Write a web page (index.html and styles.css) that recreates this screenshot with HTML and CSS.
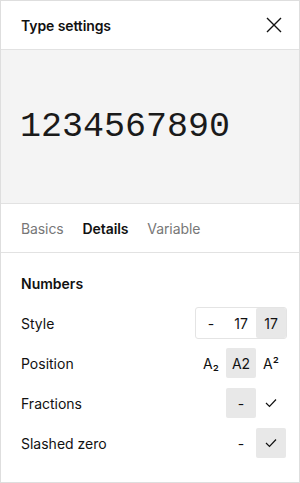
FILE: index.html
```html
<!DOCTYPE html>
<html lang="en">
<head>
    <meta charset="UTF-8">
    <title>Type settings</title>
    <link rel="stylesheet" href="styles.css">
</head>
<body>
    <div class="panel">
        <div class="header">
            <span class="title">Type settings</span>
            <svg class="close" width="16" height="16" viewBox="0 0 16 16">
                <path d="M1 1 L15 15 M15 1 L1 15" stroke="#111" stroke-width="1.4" fill="none"/>
            </svg>
        </div>

        <div class="preview">1234567890</div>

        <div class="tabs">
            <a class="tab">Basics</a>
            <a class="tab active">Details</a>
            <a class="tab">Variable</a>
        </div>

        <div class="section">
            <div class="section-title">Numbers</div>

            <div class="row">
                <span class="label">Style</span>
                <div class="seg boxed">
                    <span class="cell">-</span>
                    <span class="cell">17</span>
                    <span class="cell on">17</span>
                </div>
            </div>

            <div class="row">
                <span class="label">Position</span>
                <div class="seg">
                    <span class="cell">A₂</span>
                    <span class="cell on">A2</span>
                    <span class="cell">A²</span>
                </div>
            </div>

            <div class="row">
                <span class="label">Fractions</span>
                <div class="seg">
                    <span class="cell on">-</span>
                    <span class="cell">
                        <svg width="12" height="10" viewBox="0 0 12 10"><path d="M1 5 L4.5 8.5 L11 1.5" stroke="#111" stroke-width="1.2" fill="none"/></svg>
                    </span>
                </div>
            </div>

            <div class="row">
                <span class="label">Slashed zero</span>
                <div class="seg">
                    <span class="cell">-</span>
                    <span class="cell on">
                        <svg width="12" height="10" viewBox="0 0 12 10"><path d="M1 5 L4.5 8.5 L11 1.5" stroke="#111" stroke-width="1.2" fill="none"/></svg>
                    </span>
                </div>
            </div>
        </div>
    </div>
</body>
</html>
```

FILE: styles.css
```css
body {
    margin: 0;
    font-family: Inter, "Noto Sans", sans-serif;
    color: #111;
    background: #fff;
}
.panel {
    width: 298px;
    height: 481px;
    border: 1px solid #dedede;
    box-sizing: content-box;
}
.header {
    height: 48px;
    display: flex;
    align-items: center;
    justify-content: space-between;
    padding: 0 17px 0 20px;
    border-bottom: 1px solid #e2e2e2;
}
.title {
    font-size: 14px;
    font-weight: 600;
    letter-spacing: -0.1px;
}
.preview {
    height: 153px;
    background: #f4f4f4;
    display: flex;
    align-items: center;
    padding-left: 19px;
    font-family: "Liberation Mono", monospace;
    font-size: 35px;
    color: #1a1a1a;
    border-bottom: 1px solid #e2e2e2;
}
.tabs {
    height: 48px;
    display: flex;
    align-items: center;
    gap: 19px;
    padding-left: 20px;
    border-bottom: 1px solid #e2e2e2;
    font-size: 14px;
    letter-spacing: -0.1px;
}
.tab {
    color: #777;
}
.tab.active {
    color: #111;
    font-weight: 600;
}
.section {
    padding: 21px 13px 0 20px;
}
.section-title {
    font-size: 14px;
    font-weight: 600;
    line-height: 20px;
    margin-bottom: 9px;
}
.row {
    height: 40px;
    display: flex;
    align-items: center;
    justify-content: space-between;
    font-size: 14px;
}
.seg {
    display: flex;
}
.seg.boxed {
    border: 1px solid #e4e4e4;
    border-radius: 3px;
    margin-right: -1px;
}
.cell {
    width: 30px;
    height: 30px;
    display: flex;
    align-items: center;
    justify-content: center;
    font-size: 14px;
    border-radius: 2px;
}
.cell.on {
    background: #e8e8e8;
}
```
